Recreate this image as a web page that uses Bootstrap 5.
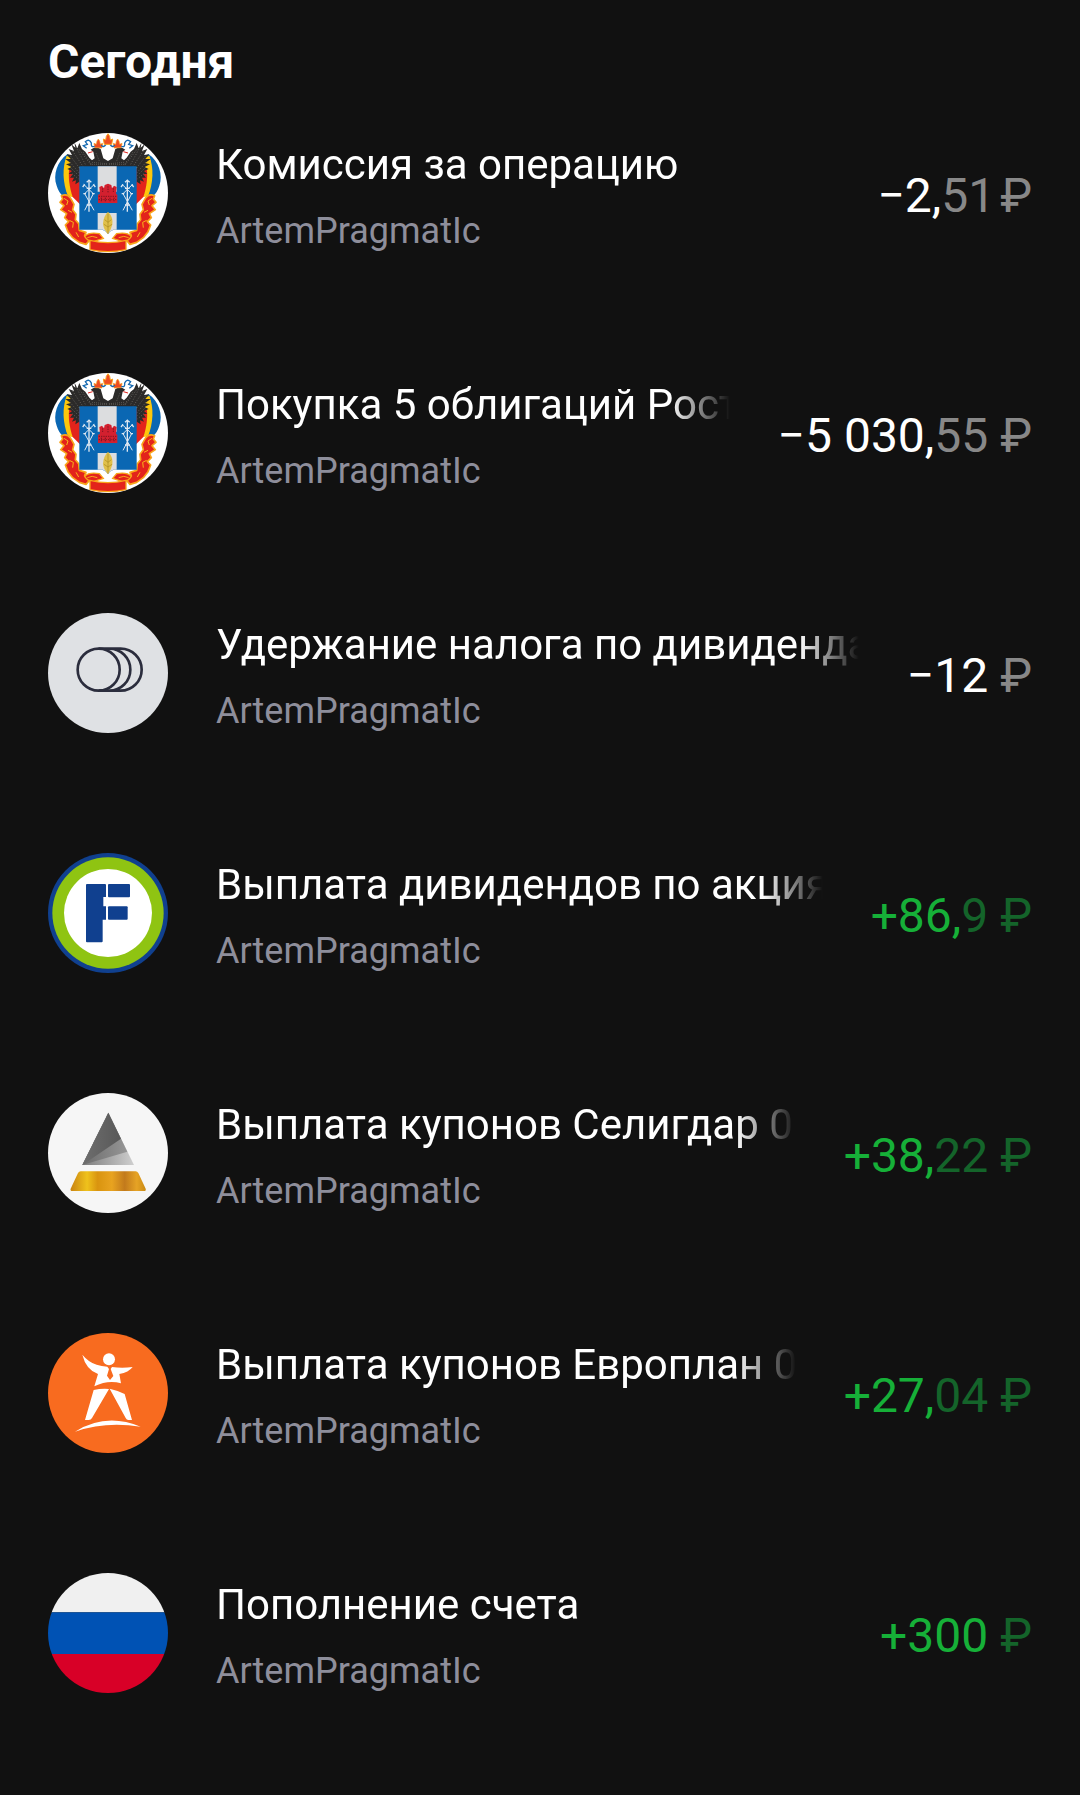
<!DOCTYPE html>
<html lang="ru">
<head>
    <meta charset="UTF-8">
    <meta name="viewport" content="width=device-width, initial-scale=1.0">
    <title>Операции</title>
    <link href="https://cdn.jsdelivr.net/npm/bootstrap@5.3.0/dist/css/bootstrap.min.css" rel="stylesheet">
    <style>
        body {
            background-color: #111111;
            color: #ffffff;
            font-family: Roboto, "Liberation Sans", sans-serif;
        }
        .feed {
            padding: 34px 48px 96px;
        }
        .day-title {
            font-size: 48px;
            line-height: 56px;
            margin-bottom: 43px;
        }
        .operations {
            gap: 114px;
        }
        .operation {
            gap: 48px;
        }
        .logo {
            width: 120px;
            height: 120px;
        }
        .info {
            min-width: 0;
            padding: 6px 0 4px;
        }
        .op-name {
            font-size: 42px;
            line-height: 52px;
            margin-bottom: 16px;
            -webkit-mask-image: linear-gradient(to left, transparent, #000 60px);
            mask-image: linear-gradient(to left, transparent, #000 60px);
        }
        .account {
            font-size: 36px;
            line-height: 48px;
            color: #8e8e9b;
        }
        .amount {
            font-size: 48px;
            line-height: 56px;
        }
        .amount span {
            color: #888888;
        }
        .income {
            color: #16b038;
        }
        .income span {
            color: #14642a;
        }
    </style>
</head>
<body>
    <!-- герб используется в двух строках -->
    <svg class="d-none" xmlns="http://www.w3.org/2000/svg">
        <symbol id="rostov" viewBox="24 24 360 360">
            <rect x="24" y="24" width="360" height="360" fill="#fff"/>
            <g id="rostovSide">
                <!-- знамёна -->
                <path d="M82 88C52 108 38 150 50 182Q56 202 68 212L120 214V100Z" fill="#0a67b3"/>
                <path d="M80 92C66 130 68 172 84 214L120 220V110Z" fill="#fdc70c"/>
                <path d="M88 130C84 156 88 186 98 216L122 240V130Z" fill="#e3231b"/>
                <!-- крыло -->
                <path d="M103 52L112 70L118 54L126 72L136 80L148 98L156 106L164 100L160 80L152 74Q168 62 182 72L190 100L204 108V126H118V170L106 178L108 166L96 170L102 158L90 158L98 148L86 146L96 138L82 132L94 126L78 118L92 114L76 102L92 102L80 88L96 90L86 72L102 78L94 58L106 68Z" fill="#2b2a29"/>
                <path d="M108 66L136 118M98 78L130 126M92 94L122 134M90 112L118 144M92 128L116 152M96 146L116 162M118 74L150 116M130 82L154 118" stroke="#827e77" stroke-width="2" stroke-dasharray="3 5" fill="none"/>
                <path d="M150 118H204M168 84L178 108M156 112L200 116" stroke="#8c877f" stroke-width="2" stroke-dasharray="2 4"/>
                <path d="M144 84L158 80" stroke="#e3231b" stroke-width="3"/>
                <!-- малая корона и лента -->
                <path d="M164 68L162 55L169 58L171 48L175 42L179 48L181 58L188 55L186 69Z" fill="#ee4b23" stroke="#f8a01c" stroke-width="2"/>
                <path d="M198 58Q190 70 184 60M164 64Q152 68 154 54Q148 40 136 50L142 58L130 62L140 70" fill="none" stroke="#1468b0" stroke-width="4"/>
                <!-- лента по краю щита -->
                <path d="M64 212Q82 204 92 220L102 238L98 254L108 268L106 284L116 296L118 316L138 322L134 332L150 344L138 358L118 352L98 338L84 320L76 300L86 290L74 278L80 266L62 254L72 242L60 232L68 222Z" fill="#e3231b" stroke="#f9a51a" stroke-width="5" stroke-linejoin="round"/>
                <path d="M72 220L84 228L80 240M84 256L96 262M88 286L100 292L98 308M108 322L116 336" fill="none" stroke="#f9b51a" stroke-width="3"/>
                <path d="M134 334Q148 320 178 326L190 340L160 350Q142 348 134 334Z" fill="#e3231b" stroke="#f9a51a" stroke-width="4"/>
                <path d="M142 338Q156 330 172 338" fill="none" stroke="#f9a51a" stroke-width="3"/>
            </g>
            <use href="#rostovSide" transform="translate(408 0) scale(-1 1)"/>
            <path d="M193 58L190 42L197 45L199 34L204 26L209 34L211 45L218 42L215 58Z" fill="#ee4b23" stroke="#f8a01c" stroke-width="3"/>
            <path d="M150 346Q204 360 258 346V374Q204 386 150 374Z" fill="#e3231b" stroke="#f9a51a" stroke-width="4"/>
            <!-- щит -->
            <path d="M118 124H290V314H222Q208 318 204 328Q200 318 186 314H118Z" fill="#0a67b3"/>
            <path d="M173 124H230V200H173ZM173 264H230V314H220Q208 318 204 328Q200 318 188 314H173Z" fill="#dcdddf"/>
            <path d="M174 234V210L180 206L178 186L186 182L192 190L194 180L204 176L214 180L216 190L222 182L230 186L228 206L232 210V234Z" fill="#d3202f"/>
            <path d="M176 214H230M176 224H230M188 190V204M204 184V204M220 190V204M184 218V232M196 218V232M210 218V232M222 218V232" stroke="#7d1420" stroke-width="3" stroke-dasharray="4 3"/>
            <path d="M204 260Q220 276 217 298Q214 314 204 327Q190 312 189 296Q190 274 204 260Z" fill="#e0c04a"/>
            <path d="M204 266V326M194 284L204 292L214 284M192 298L204 306L216 298" fill="none" stroke="#a98a1e" stroke-width="2"/>
            <g id="rostovArms" fill="none" stroke="#dfe8f2">
                <path d="M147 164V260" stroke-width="4"/>
                <path d="M131 178L160 206L134 256M163 178L134 206L162 256" stroke-width="3"/>
                <path d="M140 172L147 166L154 172M128 186L134 178M166 186L160 178M130 206H138M156 206H164M140 190H154M140 240H154" stroke-width="4"/>
            </g>
            <use href="#rostovArms" x="115"/>
        </symbol>
    </svg>

    <main class="feed">
        <h1 class="day-title fw-bold">Сегодня</h1>

        <ul class="operations list-unstyled d-flex flex-column mb-0">
            <li class="operation d-flex align-items-center">
                <svg class="logo rounded-circle flex-shrink-0 align-self-start"><use href="#rostov"/></svg>
                <div class="info flex-grow-1">
                    <div class="op-name text-nowrap overflow-hidden">Комиссия за операцию</div>
                    <div class="account">ArtemPragmatIc</div>
                </div>
                <div class="amount text-nowrap">−2,<span>51&#8202;₽</span></div>
            </li>

            <li class="operation d-flex align-items-center">
                <svg class="logo rounded-circle flex-shrink-0 align-self-start"><use href="#rostov"/></svg>
                <div class="info flex-grow-1">
                    <div class="op-name text-nowrap overflow-hidden">Покупка 5 облигаций Рост</div>
                    <div class="account">ArtemPragmatIc</div>
                </div>
                <div class="amount text-nowrap">−5 030,<span>55 ₽</span></div>
            </li>

            <li class="operation d-flex align-items-center">
                <svg class="logo rounded-circle flex-shrink-0 align-self-start" viewBox="24 24 360 360">
                    <rect x="24" y="24" width="360" height="360" fill="#dfe1e4"/>
                    <g fill="none" stroke="#2b2d3d" stroke-width="8">
                        <circle cx="176" cy="194" r="63"/>
                        <path d="M176 131H208A63 63 0 0 1 208 257H176M208 131H242A63 63 0 0 1 242 257H208"/>
                    </g>
                </svg>
                <div class="info flex-grow-1">
                    <div class="op-name text-nowrap overflow-hidden">Удержание налога по дивиденда</div>
                    <div class="account">ArtemPragmatIc</div>
                </div>
                <div class="amount text-nowrap">−12<span> ₽</span></div>
            </li>

            <li class="operation d-flex align-items-center">
                <svg class="logo rounded-circle flex-shrink-0 align-self-start" viewBox="24 24 360 360">
                    <rect x="24" y="24" width="360" height="360" fill="#10408f"/>
                    <circle cx="204" cy="204" r="167" fill="#8fc412"/>
                    <circle cx="204" cy="204" r="132" fill="#fff"/>
                    <g fill="#10408f">
                        <path d="M141 117H195Q198 117 198 120V156H190V184H198V224H188V289Q188 292 185 292H141Q138 292 138 289V120Q138 117 141 117Z"/>
                        <rect x="204" y="117" width="66" height="40" rx="3"/>
                        <rect x="204" y="184" width="59" height="40" rx="3"/>
                    </g>
                </svg>
                <div class="info flex-grow-1">
                    <div class="op-name text-nowrap overflow-hidden">Выплата дивидендов по акция</div>
                    <div class="account">ArtemPragmatIc</div>
                </div>
                <div class="amount income text-nowrap">+86,<span>9 ₽</span></div>
            </li>

            <li class="operation d-flex align-items-center">
                <svg class="logo rounded-circle flex-shrink-0 align-self-start" viewBox="24 24 360 360">
                    <defs>
                        <linearGradient id="gold">
                            <stop offset="0" stop-color="#c98312"/>
                            <stop offset=".22" stop-color="#efc21c"/>
                            <stop offset=".36" stop-color="#d9940f"/>
                            <stop offset=".55" stop-color="#e8a320"/>
                            <stop offset=".72" stop-color="#c27a1c"/>
                            <stop offset=".88" stop-color="#e6a325"/>
                            <stop offset="1" stop-color="#c98a14"/>
                        </linearGradient>
                        <linearGradient id="steelDark"><stop offset="0" stop-color="#6e6e6e"/><stop offset="1" stop-color="#585858"/></linearGradient>
                        <linearGradient id="steelMid"><stop offset="0" stop-color="#6c6c6c"/><stop offset="1" stop-color="#969696"/></linearGradient>
                        <linearGradient id="steelLight"><stop offset="0" stop-color="#7c7c7c"/><stop offset="1" stop-color="#cfcfcf"/></linearGradient>
                    </defs>
                    <rect x="24" y="24" width="360" height="360" fill="#f6f6f6"/>
                    <path d="M205 83L282 240H127Z" fill="url(#steelLight)"/>
                    <path d="M205 83L262 200L127 240Z" fill="url(#steelMid)"/>
                    <path d="M205 83L243 161L127 240Z" fill="url(#steelDark)"/>
                    <path d="M122 259H287Q292 259 295 264L317 311Q319 318 312 318H97Q90 318 92 311L114 264Q117 259 122 259Z" fill="url(#gold)"/>
                </svg>
                <div class="info flex-grow-1">
                    <div class="op-name text-nowrap overflow-hidden">Выплата купонов Селигдар 0</div>
                    <div class="account">ArtemPragmatIc</div>
                </div>
                <div class="amount income text-nowrap">+38,<span>22 ₽</span></div>
            </li>

            <li class="operation d-flex align-items-center">
                <svg class="logo rounded-circle flex-shrink-0 align-self-start" viewBox="24 24 360 360">
                    <rect x="24" y="24" width="360" height="360" fill="#f86b1f"/>
                    <g fill="#fff">
                        <circle cx="207" cy="103" r="18"/>
                        <path d="M127 89Q146 112 170 119Q184 124 202 125L207 132L201 152L210 165L220 153L212 132L216 126Q246 130 278 126Q266 142 238 147L243 175Q204 164 163 184L174 147Q138 134 127 89Z"/>
                        <path d="M161 195Q184 190 207 192L156 279Q153 285 146 285H135Z"/>
                        <path d="M209 191Q232 196 254 207L276 285H265Q260 285 257 279Z"/>
                        <path d="M105 320Q198 262 302 305Q196 288 105 320Z"/>
                    </g>
                </svg>
                <div class="info flex-grow-1">
                    <div class="op-name text-nowrap overflow-hidden">Выплата купонов Европлан 0</div>
                    <div class="account">ArtemPragmatIc</div>
                </div>
                <div class="amount income text-nowrap">+27,<span>04 ₽</span></div>
            </li>

            <li class="operation d-flex align-items-center">
                <svg class="logo rounded-circle flex-shrink-0 align-self-start" viewBox="24 24 360 360">
                    <rect x="24" y="24" width="360" height="118" fill="#f0f0f0"/>
                    <rect x="24" y="142" width="360" height="125" fill="#0052b4"/>
                    <rect x="24" y="267" width="360" height="117" fill="#d80027"/>
                </svg>
                <div class="info flex-grow-1">
                    <div class="op-name text-nowrap overflow-hidden">Пополнение счета</div>
                    <div class="account">ArtemPragmatIc</div>
                </div>
                <div class="amount income text-nowrap">+300<span> ₽</span></div>
            </li>
        </ul>
    </main>

    <script src="https://cdn.jsdelivr.net/npm/bootstrap@5.3.0/dist/js/bootstrap.bundle.min.js"></script>
</body>
</html>
